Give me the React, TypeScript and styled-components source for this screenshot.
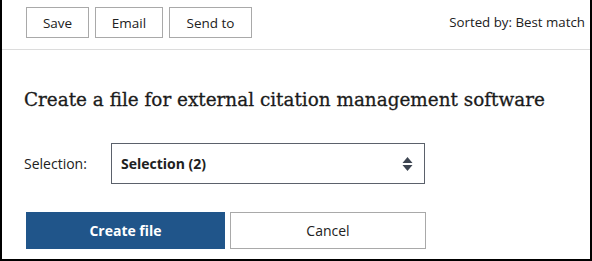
import React from 'react';
import styled, { createGlobalStyle } from 'styled-components';

const GlobalStyle = createGlobalStyle`
  html, body {
    margin: 0;
    padding: 0;
    background: #fff;
  }
  body {
    font-family: 'Open Sans', 'Noto Sans', sans-serif;
    color: #212121;
  }
`;

const Frame = styled.div`
  width: 592px;
  height: 261px;
  box-sizing: border-box;
  border: 2px solid #000;
  border-top: none;
  overflow: hidden;
`;

const Toolbar = styled.div`
  height: 50px;
  box-sizing: border-box;
  border-bottom: 1px solid #dcdcdc;
  display: flex;
  align-items: flex-start;
  padding: 7px 5px 0 24px;
`;

const ActionGroup = styled.div`
  display: flex;
  gap: 6px;
`;

const ActionButton = styled.button<{ $width: number }>`
  width: ${(p) => p.$width}px;
  height: 31px;
  box-sizing: border-box;
  border: 1px solid #a9a9a9;
  background: #fff;
  color: #212121;
  font-family: 'Open Sans', 'Noto Sans', sans-serif;
  font-size: 13.5px;
  padding: 0;
  cursor: pointer;
`;

const SortNote = styled.div`
  margin-left: auto;
  font-size: 13.3px;
  line-height: 31px;
  color: #212121;
`;

const Content = styled.section`
  padding: 38px 0 0 22px;
`;

const Heading = styled.h2`
  margin: 0;
  font-family: 'DejaVu Serif', 'Liberation Serif', serif;
  font-weight: 400;
  font-size: 18.4px;
  line-height: 24px;
  color: #1b1b1b;
  -webkit-text-stroke: 0.3px #1b1b1b;
`;

const FieldRow = styled.div`
  display: flex;
  align-items: center;
  margin-top: 31px;
`;

const FieldLabel = styled.label`
  width: 87px;
  font-size: 14px;
  color: #212121;
`;

const SelectBox = styled.div`
  width: 314px;
  height: 41px;
  box-sizing: border-box;
  border: 1px solid #5b616b;
  display: flex;
  align-items: center;
  justify-content: space-between;
  padding: 0 11px 0 9px;
  font-size: 14px;
  font-weight: 700;
  color: #212121;
`;

const ButtonRow = styled.div`
  display: flex;
  gap: 5px;
  margin: 28px 0 0 2px;
`;

const PrimaryButton = styled.button`
  width: 199px;
  height: 37px;
  border: none;
  background: #20558a;
  color: #fff;
  font-family: 'Open Sans', 'Noto Sans', sans-serif;
  font-size: 14px;
  font-weight: 700;
  cursor: pointer;
`;

const SecondaryButton = styled.button`
  width: 196px;
  height: 37px;
  box-sizing: border-box;
  border: 1px solid #a9a9a9;
  background: #fff;
  color: #212121;
  font-family: 'Open Sans', 'Noto Sans', sans-serif;
  font-size: 14px;
  cursor: pointer;
`;

const SortIcon = () => (
  <svg width="11" height="16" viewBox="0 0 11 16" aria-hidden="true">
    <path d="M5.5 1 L10.5 7 H0.5 Z" fill="#3d4551" />
    <path d="M5.5 15 L10.5 9 H0.5 Z" fill="#3d4551" />
  </svg>
);

export default function App() {
  return (
    <>
      <GlobalStyle />
      <Frame>
        <Toolbar>
          <ActionGroup>
            <ActionButton $width={63}>Save</ActionButton>
            <ActionButton $width={68}>Email</ActionButton>
            <ActionButton $width={83}>Send to</ActionButton>
          </ActionGroup>
          <SortNote>Sorted by: Best match</SortNote>
        </Toolbar>
        <Content>
          <Heading>Create a file for external citation management software</Heading>
          <FieldRow>
            <FieldLabel>Selection:</FieldLabel>
            <SelectBox>
              <span>Selection (2)</span>
              <SortIcon />
            </SelectBox>
          </FieldRow>
          <ButtonRow>
            <PrimaryButton>Create file</PrimaryButton>
            <SecondaryButton>Cancel</SecondaryButton>
          </ButtonRow>
        </Content>
      </Frame>
    </>
  );
}
